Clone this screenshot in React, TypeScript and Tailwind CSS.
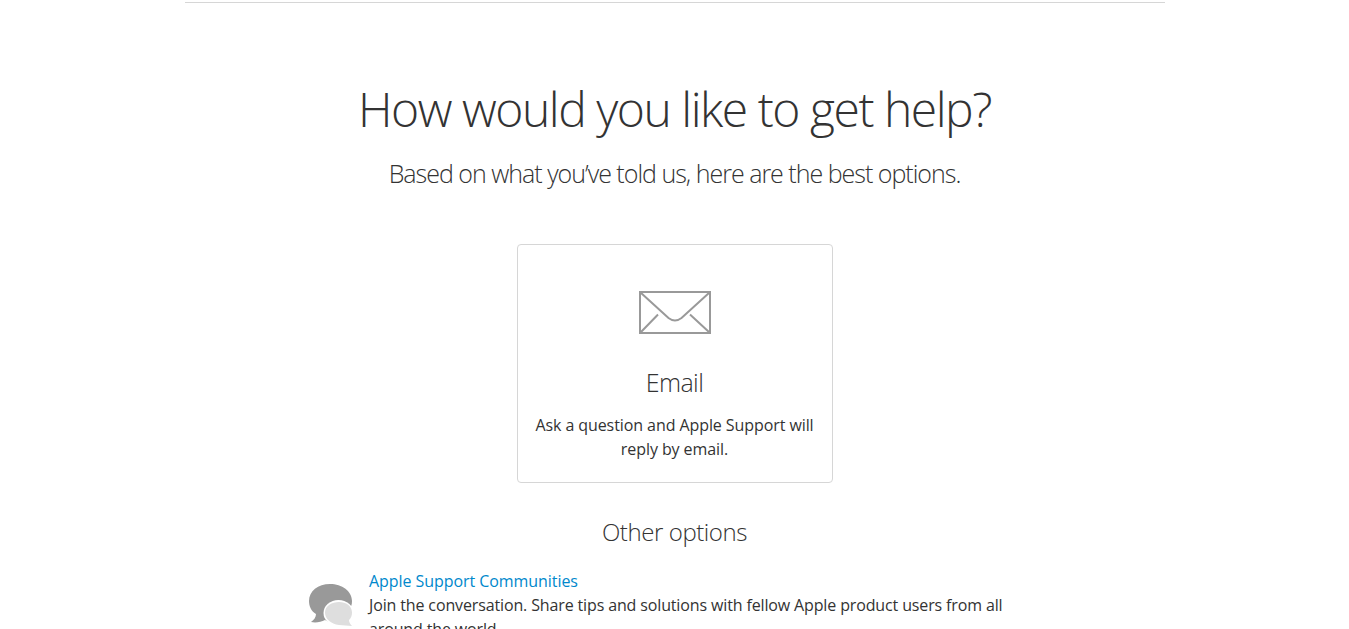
export default function App() {
  return (
    <div className="h-[629px] overflow-hidden bg-white text-[#333] font-['Open_Sans',sans-serif]">
      <div className="mx-auto w-[980px] h-[3px] border-b border-[#d6d6d6]" />
      <h1 className="mt-[73px] text-center text-[48px] leading-[66px] font-light tracking-[-1.47px]">How would you like to get help?</h1>
      <p className="mt-[13px] text-center text-[25px] leading-[36px] font-light tracking-[-1px]">Based on what you’ve told us, here are the best options.</p>
      <div className="mt-[53px] mx-auto w-[316px] h-[239px] border border-[#d6d6d6] rounded-[4px] flex flex-col items-center">
        <svg className="mt-[46px] ml-[1px]" width="72" height="43" viewBox="0 0 72 43" fill="none" stroke="#999" strokeWidth="2">
          <rect x="1" y="1" width="70" height="41" />
          <path d="M1.5 1.5 L29.5 27 Q36 32 42.5 27 L70.5 1.5" />
          <path d="M1.5 41.5 L19 23.5 M70.5 41.5 L51 23.5" />
        </svg>
        <h2 className="mt-[30px] text-[25px] leading-[36px] font-light tracking-[-0.6px]">Email</h2>
        <p className="mt-[13px] w-[300px] text-center text-[16px] leading-[24px] tracking-[-0.08px]">Ask a question and Apple Support will reply by email.</p>
      </div>
      <h2 className="mt-[31px] text-center text-[24px] leading-[36px] font-light tracking-[-0.42px]">Other options</h2>
      <div className="mt-[19px] ml-[308px] flex w-[720px]">
        <svg className="mt-[15px] shrink-0" width="46" height="46" viewBox="0 0 46 46">
          <path d="M22 0 C34 0 44 7 44 17 C44 21 43 23 41 25 L30 40 C24 39 20 38 17 36 C13 38 8 39 3 38 C6 36 8 33 8 30 C3 27 1 22 1 17 C1 7 10 0 22 0 Z" fill="#999" />
          <ellipse cx="30.5" cy="29" rx="15" ry="13" fill="#fff" />
          <path d="M31 18 C38 18 44 22 44 28.5 C44 32 43 34 41 36 C41 38 42 40 44 42 L31 41 C23 40 17 35 17 28.5 C17 22 24 18 31 18 Z" fill="#dedede" />
        </svg>
        <div className="ml-[15px] w-[650px] text-[16px] leading-[24px] tracking-[-0.135px]">
          <a className="block tracking-[-0.06px] text-[#0088cc]">Apple Support Communities</a>
          <p>Join the conversation. Share tips and solutions with fellow Apple product users from all around the world.</p>
        </div>
      </div>
    </div>
  );
}
